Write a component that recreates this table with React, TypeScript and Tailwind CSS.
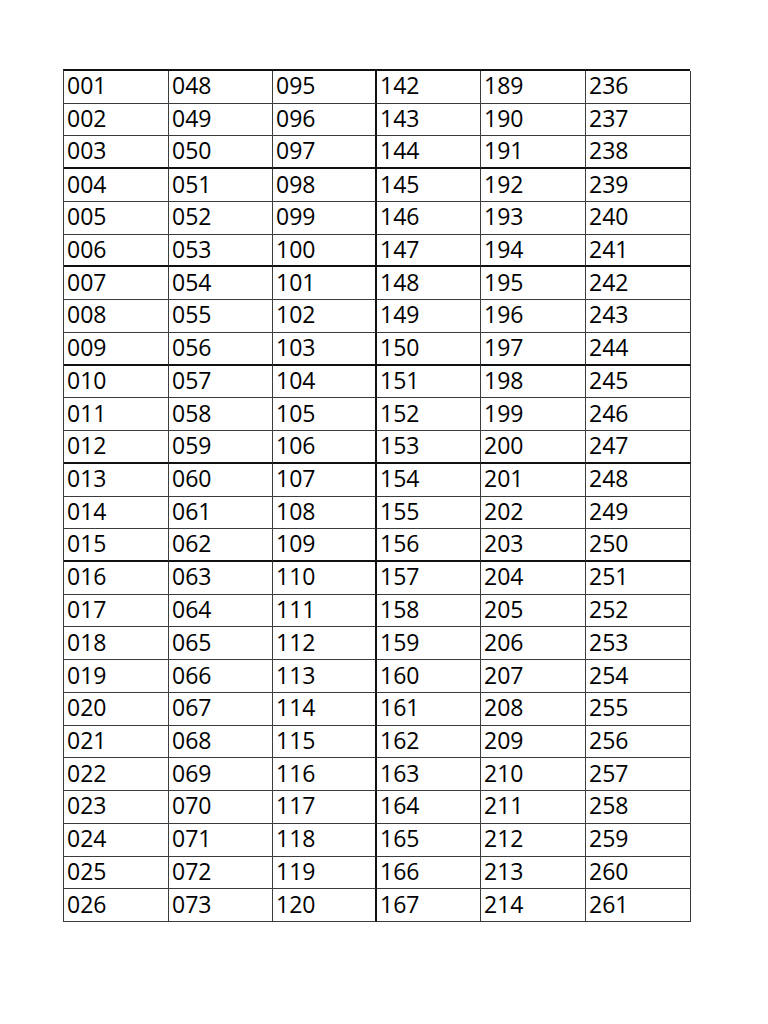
import React from "react";

const ROWS = 26;
const COLS = 6;

export default function App() {
  const cells: React.ReactNode[] = [];
  for (let r = 0; r < ROWS; r++) {
    for (let c = 0; c < COLS; c++) {
      const v = String(c * 47 + r + 1).padStart(3, "0");
      const thickBottom = r % 3 === 2 && r < 15;
      const thickRight = c === 2;
      cells.push(
        <div
          key={`${r}-${c}`}
          className={[
            "flex items-center pl-[3px] leading-none",
            thickBottom ? "border-b-2 border-b-[#111]" : "border-b border-b-[#3c3c3c]",
            thickRight ? "border-r-2 border-r-[#111]" : "border-r border-r-[#3c3c3c]",
          ].join(" ")}
        >
          <span className="-mt-[2px]">{v}</span>
        </div>
      );
    }
  }
  return (
    <div className="w-[768px] h-[1024px] bg-white pt-[69px] pl-[63px]">
      <div
        className="grid grid-cols-[105px_104px_104px_104px_105px_105px] grid-rows-[repeat(26,minmax(0,1fr))] w-[627px] h-[853px] border-t-2 border-t-[#111] border-l border-l-[#3c3c3c] text-[23px] text-black"
        style={{ fontFamily: '"Open Sans", "Noto Sans", sans-serif' }}
      >
        {cells}
      </div>
    </div>
  );
}
